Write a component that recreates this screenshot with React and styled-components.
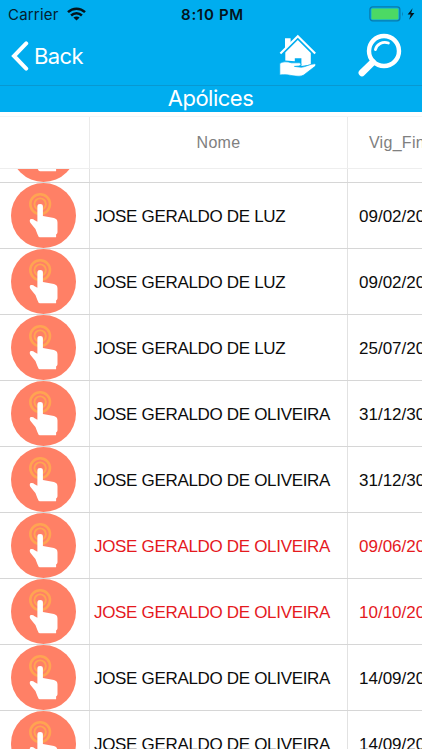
import React from "react";
import styled, { createGlobalStyle } from "styled-components";

const policies = [
  // scrolled under the header, only the bottom of its icon is visible
  { id: 1, name: "", end: "" },
  { id: 2, name: "JOSE GERALDO DE LUZ", end: "09/02/2018" },
  { id: 3, name: "JOSE GERALDO DE LUZ", end: "09/02/2018" },
  { id: 4, name: "JOSE GERALDO DE LUZ", end: "25/07/2018" },
  { id: 5, name: "JOSE GERALDO DE OLIVEIRA", end: "31/12/3000" },
  { id: 6, name: "JOSE GERALDO DE OLIVEIRA", end: "31/12/3000" },
  { id: 7, name: "JOSE GERALDO DE OLIVEIRA", end: "09/06/2017", expired: true },
  { id: 8, name: "JOSE GERALDO DE OLIVEIRA", end: "10/10/2017", expired: true },
  { id: 9, name: "JOSE GERALDO DE OLIVEIRA", end: "14/09/2018" },
  { id: 10, name: "JOSE GERALDO DE OLIVEIRA", end: "14/09/2018" },
];

function WifiIcon() {
  return (
    <svg width="19" height="14" viewBox="0 0 19 14" fill="none" stroke="#04141c" strokeWidth="2.5">
      <path d="M1 5.2C5.8 .6 13.2 .6 18 5.2" />
      <path d="M4.1 8.5C7.2 5.6 11.8 5.6 14.9 8.5" />
      <path d="M9.5 13.4L6.4 10.6C8.2 9.1 10.8 9.1 12.6 10.6Z" fill="#04141c" stroke="none" />
    </svg>
  );
}

function BatteryIcon() {
  return (
    <svg width="48" height="16" viewBox="0 0 48 16">
      <rect x=".9" y=".9" width="30" height="14" rx="2.8" fill="none" stroke="#087bad" strokeWidth="1.3" />
      <rect x="2.4" y="2.4" width="27" height="11" rx="1.2" fill="#4cd964" />
      <path d="M33 5.5Q34.8 8 33 10.5Z" fill="#087bad" />
      <path d="M43.6 2.2L38.6 8.6H41.7L40.2 13.7L45.4 7H42.2Z" fill="#04141c" />
    </svg>
  );
}

function HouseIcon() {
  return (
    <svg width="38" height="44" viewBox="0 0 38 44">
      <path
        d="M1.4 20.6L18.8 3.2L36.2 20.6"
        fill="none"
        stroke="#fff"
        strokeWidth="2.1"
      />
      <path d="M6 5.2H11.6V10.4L6 16Z" fill="#fff" />
      <path d="M18.8 7L31.8 20V31.4L22.4 33V25.2H15.8V28.2L6.3 27.4V19.4Z" fill="#fff" />
      <path
        d="M.8 30.4C5 28 9 28.8 12.3 29.8H19.6C22.6 29.8 22.6 32.6 19.8 33L15.4 33.4L22.5 34.3C27 33.8 30.5 31 35.8 30.8C37.4 31.2 37 32.7 35.5 33.8L24.8 42C22.4 43.6 18 43.4 14 42.8C9.4 42 6.2 41.2 .8 42Z"
        fill="#fff"
        stroke="#00adef"
        strokeWidth=".7"
      />
    </svg>
  );
}

function SearchIcon() {
  return (
    <svg width="44" height="44" viewBox="0 0 44 44" fill="none" stroke="#fff" strokeLinecap="round">
      <circle cx="26" cy="18" r="15" strokeWidth="4.4" />
      <path d="M14.6 29.4L4 39.8" strokeWidth="6.8" />
      <path d="M17.4 16.6C18.8 11.2 24.6 8 30.4 10" strokeWidth="2.8" />
    </svg>
  );
}

function TapIcon() {
  return (
    <TapSvg viewBox="0 0 66 66">
      <circle cx="33" cy="33" r="33" fill="#ff8066" />
      <circle cx="29.6" cy="21.4" r="10" fill="none" stroke="#ffa452" strokeWidth="2.6" />
      <circle cx="29.6" cy="21.4" r="5.8" fill="none" stroke="#ffa452" strokeWidth="2" />
      <path
        d="M26.8 23.8Q26.8 21.3 29.6 21.3Q32.4 21.3 32.4 23.8V33.4L43.6 35.6Q47.2 36.6 47.2 40V50Q47.2 51.4 45.8 52.4V55.2H29.5Q27.8 55 27 52.2L24.8 46.6L19.6 40.4Q18.2 37.6 20.2 36.6Q22.2 36 24 37.8L26.8 39.4Z"
        fill="#fff"
      />
    </TapSvg>
  );
}

export default function App() {
  return (
    <Screen>
      <GlobalStyle />
      <StatusBar>
        <Carrier>
          Carrier
          <WifiIcon />
        </Carrier>
        <Clock>8:10 PM</Clock>
        <Battery>
          <BatteryIcon />
        </Battery>
      </StatusBar>
      <NavBar>
        <BackButton>
          <svg width="18" height="30" viewBox="0 0 18 30" fill="none" stroke="#fff" strokeWidth="4">
            <path d="M15.2 2.4L3 15L15.2 27.6" strokeLinecap="round" />
          </svg>
          <BackLabel>Back</BackLabel>
        </BackButton>
        <Actions>
          <HouseIcon />
          <SearchIcon />
        </Actions>
      </NavBar>
      <Title>Apólices</Title>
      <TableHead>
        <HeadCell />
        <HeadCell>Nome</HeadCell>
        <HeadCell>Vig_Final</HeadCell>
      </TableHead>
      <TableBody>
        <Rows>
          {policies.map((policy) => (
            <Row key={policy.id} $expired={policy.expired}>
              <IconCell>
                <TapIcon />
              </IconCell>
              <NameCell>{policy.name}</NameCell>
              <DateCell>{policy.end}</DateCell>
            </Row>
          ))}
        </Rows>
      </TableBody>
    </Screen>
  );
}

const GlobalStyle = createGlobalStyle`
  * {
    box-sizing: border-box;
  }
  body {
    margin: 0;
    overflow: hidden;
  }
  svg {
    display: block;
    flex-shrink: 0;
  }
`;
const Screen = styled.div`
  display: flex;
  flex-direction: column;
  width: 422px;
  height: 750px;
  overflow: hidden;
  background: #fff;
  font-family: "Liberation Sans", Arial, sans-serif;
`;
const StatusBar = styled.div`
  display: grid;
  grid-template-columns: 1fr auto 1fr;
  align-items: center;
  height: 28px;
  flex-shrink: 0;
  padding: 0 5px 0 8px;
  background: #00adef;
  font-family: Inter, sans-serif;
  color: #04202d;
`;
const Carrier = styled.div`
  display: flex;
  align-items: center;
  gap: 8px;
  font-size: 15px;
  letter-spacing: 0.2px;
`;
const Clock = styled.div`
  color: #04141c;
  font-size: 15px;
  font-weight: 600;
  letter-spacing: 0.7px;
`;
const Battery = styled.div`
  display: flex;
  justify-content: flex-end;
`;
const NavBar = styled.div`
  display: flex;
  justify-content: space-between;
  height: 58px;
  flex-shrink: 0;
  padding: 5px 20px 0 11px;
  background: #00adef;
  border-bottom: 1px solid #0898d1;
`;
const BackButton = styled.div`
  display: flex;
  align-items: center;
  gap: 5px;
  height: 46px;
  color: #fff;
`;
const BackLabel = styled.span`
  font-family: Inter, sans-serif;
  font-size: 22px;
  letter-spacing: -0.6px;
`;
const Actions = styled.div`
  display: flex;
  gap: 41px;
`;
const Title = styled.div`
  display: flex;
  align-items: center;
  justify-content: center;
  height: 26px;
  flex-shrink: 0;
  padding: 0 1px 2px 0;
  background: #00adef;
  color: #fff;
  font-family: Inter, sans-serif;
  font-size: 22px;
  letter-spacing: -0.5px;
`;
const TableHead = styled.div`
  display: grid;
  grid-template-columns: 90px 258px 112px;
  height: 53px;
  flex-shrink: 0;
  margin-top: 4px;
  border-top: 1px solid #f5f5f5;
  border-bottom: 1px solid #eeeeee;
`;
const HeadCell = styled.div`
  display: flex;
  align-items: center;
  justify-content: center;
  border-right: 1px solid #ebebeb;
  color: #808080;
  font-size: 16px;
  letter-spacing: 0.3px;
`;
const TableBody = styled.div`
  height: 580px;
  overflow: hidden;
`;
const Rows = styled.div`
  margin-top: -52px;
`;
const Row = styled.div`
  display: grid;
  grid-template-columns: 90px 258px 112px;
  height: 66px;
  border-bottom: 1px solid #d6d6d6;
  color: ${(props) => (props.$expired ? "#e5191e" : "#0c0c0c")};
  font-size: 17px;
`;
const Cell = styled.div`
  display: flex;
  align-items: center;
  white-space: nowrap;
  border-right: 1px solid #e2e2e2;
`;
const IconCell = styled(Cell)`
  padding-left: 11px;
`;
const NameCell = styled(Cell)`
  padding: 2px 0 0 4px;
  letter-spacing: -0.32px;
`;
const DateCell = styled(Cell)`
  padding: 2px 0 0 11px;
`;
const TapSvg = styled.svg`
  width: 65px;
  height: 65px;
`;
